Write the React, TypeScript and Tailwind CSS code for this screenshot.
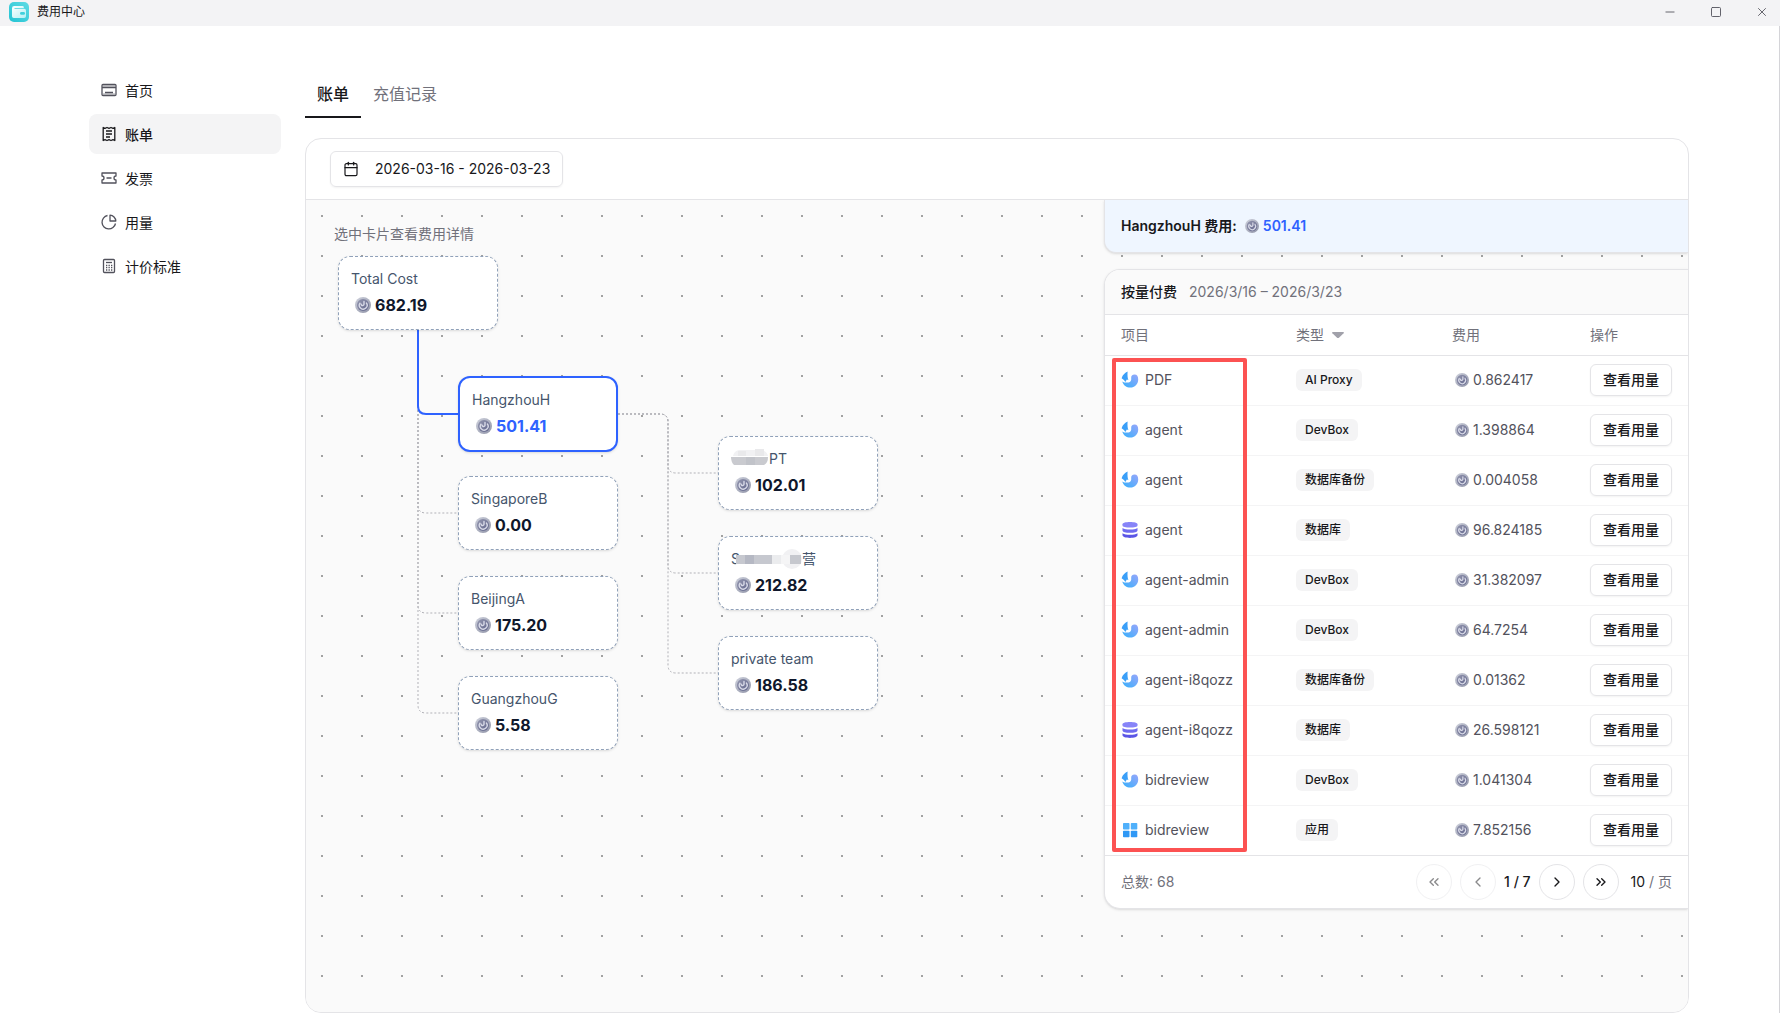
import { Calendar, ChevronLeft, ChevronRight, ChevronsLeft, ChevronsRight, Minus, Square, X } from 'lucide-react';
import type { ReactNode } from 'react';

function WalletLogo() {
  return (
    <svg className="size-5" viewBox="0 0 20 20" aria-hidden="true">
      <defs>
        <linearGradient id="walletBg" x1="1" y1="0" x2="0" y2="1">
          <stop offset="0" stopColor="#5fdbe4" />
          <stop offset="1" stopColor="#22c3d3" />
        </linearGradient>
        <linearGradient id="walletFace" x1="0" y1="0" x2="1" y2="1">
          <stop offset="0" stopColor="#ffffff" />
          <stop offset="1" stopColor="#b5f0f4" />
        </linearGradient>
      </defs>
      <rect width="20" height="20" rx="5" fill="url(#walletBg)" />
      <path d="M3 6.2A2.2 2.2 0 0 1 5.200 4H13.500A1.300 1.300 0 0 1 14.800 5.300V6H5.500V6.800H15.200A1.800 1.800 0 0 1 17 8.600V14.200A1.800 1.800 0 0 1 15.200 16H4.800A1.800 1.800 0 0 1 3 14.200Z" fill="url(#walletFace)" />
      <rect x="11" y="10" width="5" height="2.800" rx="1.400" fill="#3fd0dc" />
    </svg>
  );
}

function Coin({ size }: { size: 'sm' | 'md' }) {
  return (
    <svg className={size === 'md' ? 'size-4 shrink-0' : 'size-3.5 shrink-0'} viewBox="0 0 16 16" aria-hidden="true">
      <defs>
        <linearGradient id="coinRim" x1="0" y1="0" x2="1" y2="1">
          <stop offset="0" stopColor="#cfd2dd" />
          <stop offset="1" stopColor="#8e92a6" />
        </linearGradient>
        <linearGradient id="coinFace" x1="0" y1="0" x2="1" y2="1">
          <stop offset="0" stopColor="#9598b0" />
          <stop offset="1" stopColor="#60648a" />
        </linearGradient>
      </defs>
      <circle cx="8" cy="8" r="8" fill="url(#coinRim)" />
      <circle cx="8" cy="8" r="6" fill="url(#coinFace)" />
      <path d="M4.900 6.200A3.900 3.900 0 1 0 11.400 6" fill="none" stroke="#d9dbe8" strokeWidth="1.400" strokeLinecap="round" />
      <path d="M9 4.500V7.400A1.500 1.500 0 0 1 6.600 8.200L6 7" fill="none" stroke="#d9dbe8" strokeWidth="1.400" strokeLinecap="round" />
    </svg>
  );
}

type Kind = 'devbox' | 'db' | 'app';

function KindIcon({ kind }: { kind: Kind }) {
  if (kind === 'db') {
    return (
      <svg className="size-[18px] shrink-0" viewBox="0 0 18 18" aria-hidden="true">
        <path d="M1.500 3.200C1.500 1.800 4.800 1 9 1S16.500 1.800 16.500 3.200V4.500C16.500 5.900 13.200 6.600 9 6.600S1.500 5.900 1.500 4.500Z" fill="#8784f8" />
        <path d="M1.500 7C3.200 8.100 6 8.500 9 8.500S14.800 8.100 16.500 7V9.500C16.500 11 13.200 11.800 9 11.800S1.500 11 1.500 9.500Z" fill="#6f6bf0" />
        <path d="M1.500 12.300C3.200 13.400 6 13.800 9 13.800S14.800 13.400 16.500 12.300V14.300C16.500 15.900 13.200 16.900 9 16.900S1.500 15.900 1.500 14.300Z" fill="#5a55e6" />
      </svg>
    );
  }
  if (kind === 'app') {
    return (
      <svg className="size-[18px] shrink-0" viewBox="0 0 18 18" aria-hidden="true">
        <rect x="2" y="2" width="6.500" height="6.500" rx=".8" fill="#4fb0fb" />
        <rect x="9.800" y="2" width="6.500" height="6.500" rx=".8" fill="#4fb0fb" />
        <rect x="2" y="9.800" width="6.500" height="6.500" rx=".8" fill="#2f98f5" />
        <rect x="9.800" y="9.800" width="6.500" height="6.500" rx=".8" fill="#2f98f5" />
      </svg>
    );
  }
  return (
    <svg className="size-[18px] shrink-0" viewBox="0 0 18 18" aria-hidden="true">
      <defs>
        <linearGradient id="devTail" x1="1" y1="0" x2="0" y2="1">
          <stop offset="0" stopColor="#97a6fb" />
          <stop offset="1" stopColor="#35b0fb" />
        </linearGradient>
      </defs>
      <path d="M1.200 10.400C2.400 14.200 5.600 16.600 9.200 16.600C13.800 16.600 17.200 13 17.200 8.400C17.200 5.600 16 3.600 13.600 3.600C11.200 3.600 10 5.200 10.200 7C10.500 9.400 9.600 11 7.600 11.400C5.600 11.800 3 11.600 1.200 10.400Z" fill="url(#devTail)" />
      <path d="M6.600 .6C4.200 1.600 1.600 3.800 .6 7.200C2 8 3.200 9 4.400 11L5.800 8.600L7.400 8.900C6.600 7.800 6.300 4 6.600 .6Z" fill="#3a9ff8" />
    </svg>
  );
}

function NavGlyph({ children }: { children: ReactNode }) {
  return (
    <svg className="size-4 shrink-0" viewBox="0 0 16 16" fill="none" stroke="currentColor" strokeWidth="1.300" strokeLinejoin="round" aria-hidden="true">
      {children}
    </svg>
  );
}

const nav = [
  { label: '首页', icon: <NavGlyph><rect x="1" y="2.500" width="14" height="11" rx="1" /><path d="M1 5.500H15M4 10.500H12" /><path d="M2 4H14M2 12H14" opacity=".35" /></NavGlyph> },
  { label: '账单', active: true, icon: <NavGlyph><path d="M2.200 1.500L4 2.300L6 1.500L8 2.300L10 1.500L12 2.300L13.800 1.500V14.500L12 13.700L10 14.500L8 13.700L6 14.500L4 13.700L2.200 14.500ZM5 5H11M5 8H11M5 11H9" /></NavGlyph> },
  { label: '发票', icon: <NavGlyph><path d="M1 3H15V6A2 2 0 0 0 15 10V13H1V10A2 2 0 0 0 1 6ZM5.500 8H10.500" /></NavGlyph> },
  { label: '用量', icon: <NavGlyph><path d="M6.500 1.500A6.800 6.800 0 1 0 14.500 9.500" /><path d="M9 1.200A6 6 0 0 1 14.800 7H9Z" /></NavGlyph> },
  { label: '计价标准', icon: <NavGlyph><rect x="2.500" y="1.500" width="11" height="13" rx="1" /><path d="M5 4.500H11" /><path d="M5 7.500H11.500M5 9.700H11.500M5 12H11.500" strokeDasharray="1.300 1.200" /></NavGlyph> },
];

type Row = { name: string; kind: Kind; type: string; cost: string };
const rows: Row[] = [
  { name: 'PDF', kind: 'devbox', type: 'AI Proxy', cost: '0.862417' },
  { name: 'agent', kind: 'devbox', type: 'DevBox', cost: '1.398864' },
  { name: 'agent', kind: 'devbox', type: '数据库备份', cost: '0.004058' },
  { name: 'agent', kind: 'db', type: '数据库', cost: '96.824185' },
  { name: 'agent-admin', kind: 'devbox', type: 'DevBox', cost: '31.382097' },
  { name: 'agent-admin', kind: 'devbox', type: 'DevBox', cost: '64.7254' },
  { name: 'agent-i8qozz', kind: 'devbox', type: '数据库备份', cost: '0.01362' },
  { name: 'agent-i8qozz', kind: 'db', type: '数据库', cost: '26.598121' },
  { name: 'bidreview', kind: 'devbox', type: 'DevBox', cost: '1.041304' },
  { name: 'bidreview', kind: 'app', type: '应用', cost: '7.852156' },
];

function Node({ place, title, amount, selected }: { place: string; title: ReactNode; amount: string; selected?: boolean }) {
  return (
    <button
      type="button"
      className={`absolute w-40 rounded-xl bg-white p-3 text-left shadow-sm ${selected ? 'border-2 border-[#2e62ff]' : 'border border-dashed border-slate-400'} ${place}`}
    >
      <span className="flex h-5 items-center text-sm text-slate-600">{title}</span>
      <span className={`mt-1 ml-1 flex h-6 items-center gap-1 text-base font-bold ${selected ? 'text-[#2e62ff]' : 'text-slate-900'}`}>
        <Coin size="md" />
        {amount}
      </span>
    </button>
  );
}

function PageButton({ label, disabled, children }: { label: string; disabled?: boolean; children: ReactNode }) {
  return (
    <button
      type="button"
      aria-label={label}
      disabled={disabled}
      className="flex size-9 items-center justify-center rounded-full border border-zinc-200 text-zinc-900 disabled:opacity-50"
    >
      {children}
    </button>
  );
}

export default function App() {
  return (
    <div className="flex h-screen min-h-[960px] flex-col bg-white font-['Inter','Noto_Sans_CJK_SC',sans-serif] text-sm text-zinc-900">
      <header className="flex h-[26px] shrink-0 items-center bg-[#f3f3f5] pr-2.5 pb-0.5 pl-[9px] text-xs">
        <WalletLogo />
        <span className="ml-2">费用中心</span>
        <div className="ml-auto flex items-center gap-[30px] text-zinc-600">
          <button type="button" aria-label="最小化" className="flex size-4 items-center justify-center"><Minus size={14} strokeWidth={1.500} /></button>
          <button type="button" aria-label="最大化" className="flex size-4 items-center justify-center"><Square size={12} strokeWidth={1.800} /></button>
          <button type="button" aria-label="关闭" className="flex size-4 items-center justify-center"><X size={14} strokeWidth={1.500} /></button>
        </div>
      </header>

      <div className="flex min-h-0 flex-1 flex-col pb-3.5">
        <div className="flex min-h-0 flex-1 justify-center border-r border-zinc-300 pt-[42px] pr-[25px] pl-6">
          <div className="flex w-full max-w-[1600px] gap-6">
            <nav className="mt-0.5 flex w-48 shrink-0 flex-col gap-1">
              {nav.map((item) => (
                <a
                  key={item.label}
                  href="#"
                  className={`flex h-10 items-center gap-2 rounded-lg px-3 ${item.active ? 'bg-zinc-100 font-medium text-zinc-900' : 'text-zinc-600'}`}
                >
                  {item.icon}
                  <span className="pt-0.5 text-zinc-900">{item.label}</span>
                </a>
              ))}
            </nav>

            <main className="flex min-w-0 flex-1 flex-col">
              <div role="tablist" className="flex shrink-0 text-base">
                <button type="button" role="tab" aria-selected="true" className="border-b-2 border-zinc-900 px-3 pt-3.5 pb-2.5 font-medium">账单</button>
                <button type="button" role="tab" aria-selected="false" className="border-b-2 border-transparent px-3 pt-3.5 pb-2.5 text-zinc-500">充值记录</button>
              </div>

              <section className="mt-5 flex min-h-0 flex-1 flex-col overflow-hidden rounded-2xl border border-zinc-200">
                <div className="shrink-0 border-b border-zinc-200 px-6 py-3">
                  <button type="button" className="flex h-9 items-center gap-4 rounded-md border border-zinc-200 px-3 shadow-xs">
                    <Calendar size={16} strokeWidth={1.800} />
                    2026-03-16 - 2026-03-23
                  </button>
                </div>

                <div className="relative flex min-h-0 flex-1 justify-end overflow-hidden bg-zinc-50 bg-[radial-gradient(circle_at_16px_16px,#a1a1a1_1px,transparent_1px)] bg-size-[40px_40px]">
                  <svg className="absolute top-0 left-0 h-[520px] w-[420px]" viewBox="0 0 420 520" fill="none" aria-hidden="true">
                    <g stroke="#b1b1b7" strokeDasharray="2 2">
                      <path d="M112 130V305Q112 313 120 313H152" />
                      <path d="M112 130V405Q112 413 120 413H152" />
                      <path d="M112 130V505Q112 513 120 513H152" />
                      <path d="M312 214H354Q362 214 362 222V265Q362 273 370 273H412" />
                      <path d="M312 214H354Q362 214 362 222V365Q362 373 370 373H412" />
                      <path d="M312 214H354Q362 214 362 222V465Q362 473 370 473H412" />
                    </g>
                    <path d="M112 130V206Q112 214 120 214H152" stroke="#2e62ff" strokeWidth="2" />
                  </svg>
                  <p className="absolute top-6 left-7 leading-5 text-zinc-500">选中卡片查看费用详情</p>
                  <Node place="top-14 left-8" title="Total Cost" amount="682.19" />
                  <Node place="top-44 left-38" title="HangzhouH" amount="501.41" selected />
                  <Node place="top-69 left-38" title="SingaporeB" amount="0.00" />
                  <Node place="top-94 left-38" title="BeijingA" amount="175.20" />
                  <Node place="top-119 left-38" title="GuangzhouG" amount="5.58" />
                  <Node
                    place="top-59 left-103"
                    title={
                      <>
                        <svg className="h-5 w-[38px]" viewBox="0 0 38 20" aria-hidden="true">
                          <path d="M2 7Q3 2 8 1H30Q36 2 37 7Z" fill="#f1f1f3" />
                          <path d="M7 2H15V7H7ZM24 0H33V7H24Z" fill="#e9e9eb" />
                          <path d="M0 8H37Q37 14 33 16H3Q0 13 0 8Z" fill="#c9cacf" />
                          <path d="M15 8H24V16H15Z" fill="#c1c3c9" />
                        </svg>
                        PT
                      </>
                    }
                    amount="102.01"
                  />
                  <Node
                    place="top-84 left-103"
                    title={
                      <>
                        S
                        <svg className="-ml-1 h-5 w-[66px]" viewBox="0 0 66 20" aria-hidden="true">
                          <circle cx="56" cy="10" r="10" fill="#f1f1f3" />
                          <path d="M0 6H9V15H0ZM18 6H36V15H18Z" fill="#c6c8cf" />
                          <path d="M9 6H18V15H9Z" fill="#b5b8c3" />
                          <path d="M36 6H45V15H36Z" fill="#ebecee" />
                          <path d="M45 6H54V15H45Z" fill="#f5f5f6" />
                          <path d="M54 6H65V15H54Z" fill="#c6c8ce" />
                        </svg>
                        营
                      </>
                    }
                    amount="212.82"
                  />
                  <Node place="top-109 left-103" title="private team" amount="186.58" />

                  <aside className="relative flex w-[584px] shrink-0 flex-col gap-4 self-start">
                    <div className="flex h-[53px] items-center rounded-bl-xl border-b border-l border-zinc-200 bg-blue-50 px-4 font-semibold shadow-sm">
                      HangzhouH 费用:
                      <span className="ml-2 flex items-center gap-1 text-[#2e62ff]">
                        <Coin size="sm" />
                        501.41
                      </span>
                    </div>

                    <div className="overflow-hidden rounded-l-2xl border-y border-l border-zinc-200 bg-white shadow-sm">
                      <div className="flex h-[45px] items-center gap-3 border-b border-zinc-200 bg-zinc-50 px-4">
                        <h2 className="font-medium">按量付费</h2>
                        <span className="text-zinc-500">2026/3/16 – 2026/3/23</span>
                      </div>
                      <div className="relative">
                        <table className="w-full table-fixed border-separate border-spacing-0 text-left text-zinc-600">
                          <thead>
                            <tr className="h-[41px] text-zinc-500 [&>th]:border-b [&>th]:border-zinc-200 [&>th]:px-4 [&>th]:font-normal">
                              <th scope="col" className="w-[175px]">项目</th>
                              <th scope="col" className="w-[156px]">
                                <button type="button" className="flex items-center gap-2">
                                  类型
                                  <svg className="h-1.5 w-3" viewBox="0 0 12 6" fill="#a1a1aa" aria-hidden="true">
                                    <path d="M.8 0H11.200Q12.400 .2 11.600 1.200L7.200 5.500Q6 6.500 4.800 5.500L.4 1.200Q-.4 .2 .8 0Z" />
                                  </svg>
                                </button>
                              </th>
                              <th scope="col">费用</th>
                              <th scope="col" className="w-[114px]">操作</th>
                            </tr>
                          </thead>
                          <tbody>
                            {rows.map((row, i) => (
                              <tr key={i} className="h-[50px] [&>td]:border-b [&>td]:border-zinc-100 [&>td]:px-4 [&>td]:pb-px last:[&>td]:border-zinc-200">
                                <td>
                                  <div className="flex items-center gap-1.5">
                                    <KindIcon kind={row.kind} />
                                    {row.name}
                                  </div>
                                </td>
                                <td>
                                  <span className="flex h-[22px] w-fit items-center rounded-md bg-zinc-100 px-[9px] text-xs font-medium text-zinc-900">{row.type}</span>
                                </td>
                                <td>
                                  <div className="ml-[3px] flex items-center gap-1">
                                    <Coin size="sm" />
                                    {row.cost}
                                  </div>
                                </td>
                                <td>
                                  <button type="button" className="block h-8 rounded-md border border-zinc-200 px-3 font-medium whitespace-nowrap text-zinc-900 shadow-xs">查看用量</button>
                                </td>
                              </tr>
                            ))}
                          </tbody>
                        </table>
                        <div className="pointer-events-none absolute top-[43px] bottom-1 left-[7px] w-[135px] rounded-xs border-4 border-[#fc5252]" />
                      </div>
                      <div className="flex h-[52px] items-center gap-2 px-4">
                        <span className="mr-auto text-zinc-500">总数: 68</span>
                        <PageButton label="第一页" disabled><ChevronsLeft size={16} /></PageButton>
                        <PageButton label="上一页" disabled><ChevronLeft size={16} /></PageButton>
                        <span className="font-medium">1 / 7</span>
                        <PageButton label="下一页"><ChevronRight size={16} /></PageButton>
                        <PageButton label="最后一页"><ChevronsRight size={16} /></PageButton>
                        <span className="ml-1 text-zinc-500"><span className="text-zinc-900">10</span> / 页</span>
                      </div>
                    </div>
                  </aside>
                </div>
              </section>
            </main>
          </div>
        </div>
      </div>
    </div>
  );
}
